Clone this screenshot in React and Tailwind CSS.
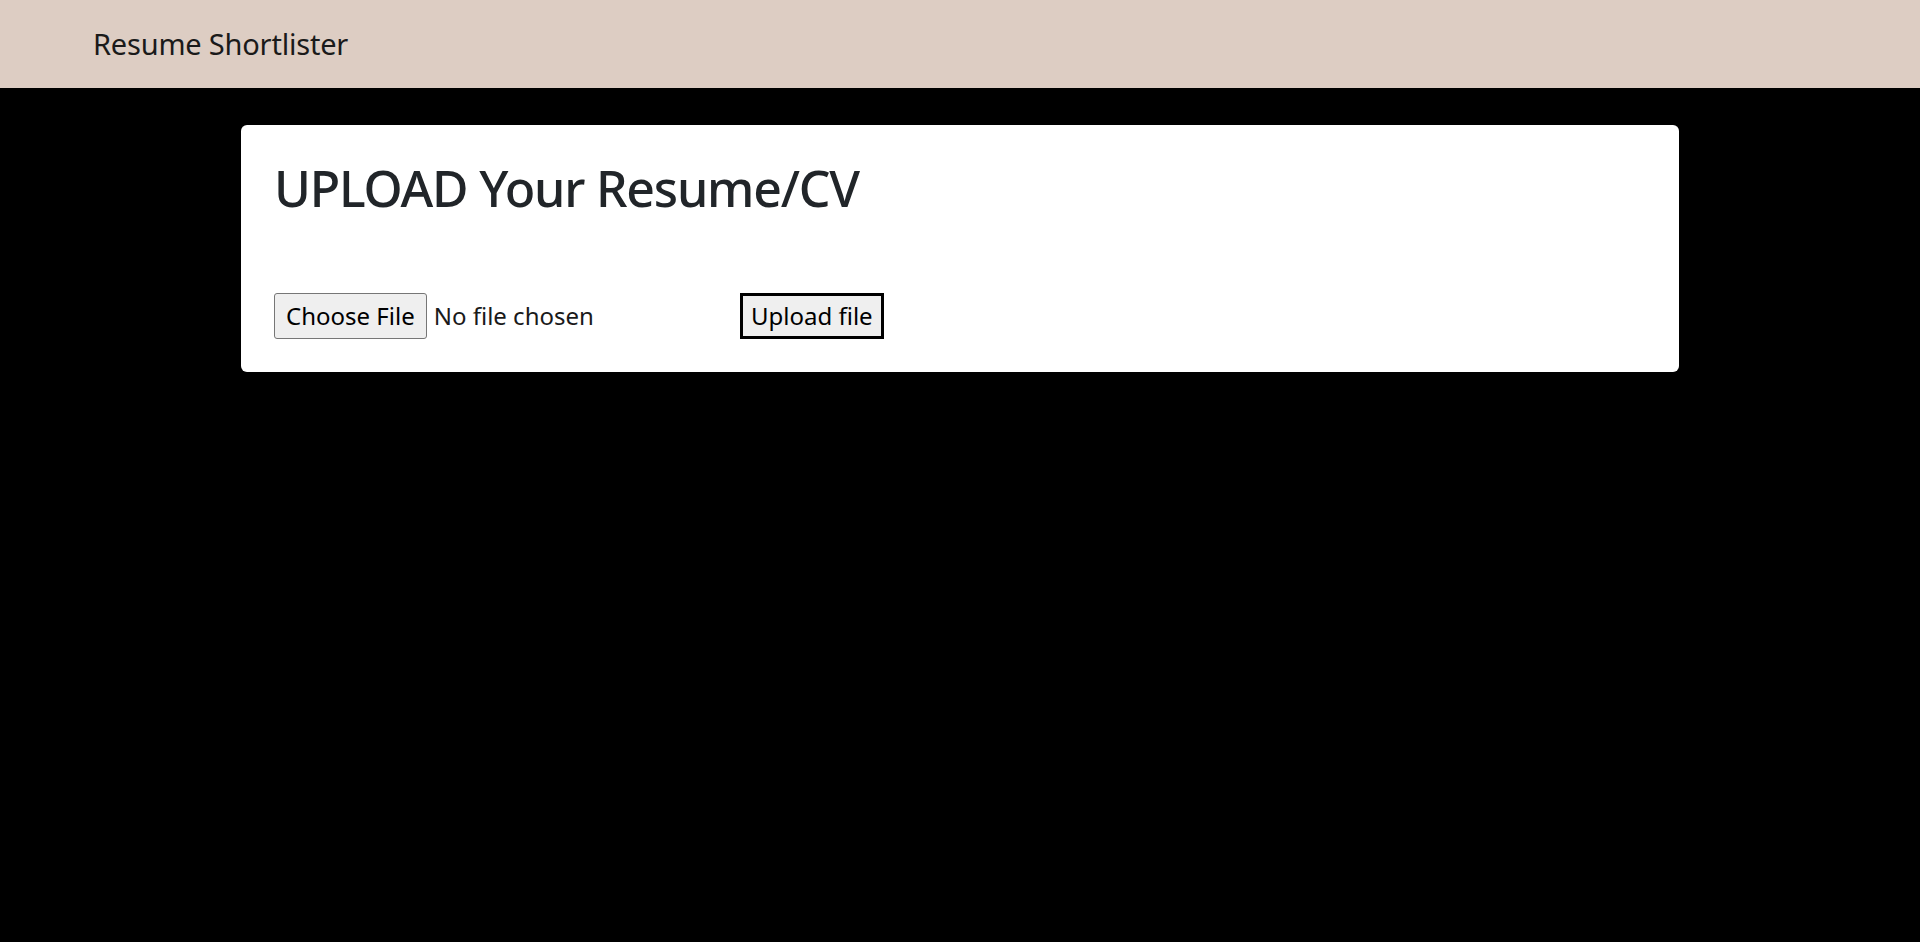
import React from 'react';

const font = { fontFamily: '"Noto Sans", "Open Sans", sans-serif' };

const App = () => {
    return (
        <div className="min-h-screen bg-black" style={font}>
            {/* Navbar */}
            <nav className="h-[88px] bg-[#ddcdc3] flex items-center pl-[93px]">
                <span className="text-[29px] text-[#1a1a1a] tracking-[-0.2px]">Resume Shortlister</span>
            </nav>

            {/* Upload card */}
            <div className="pt-[37px] flex justify-center">
                <div className="w-[1438px] bg-white rounded-[6px] px-[33px] pt-[33px] pb-[33px]">
                    <h1 className="text-[50px] leading-[60px] font-medium text-[#212529] tracking-[-1.2px]">UPLOAD Your Resume/CV</h1>
                    <div className="mt-[75px] flex items-center">
                        <div className="w-[466px] flex items-center">
                            <button className="h-[46px] px-[11px] bg-[#efefef] border border-[#767676] rounded-[3px] text-[24px] leading-none text-black">
                                Choose File
                            </button>
                            <span className="ml-[7px] text-[24px] text-[#1a1a1a]">No file chosen</span>
                        </div>
                        <button className="h-[46px] px-[8px] bg-[#efefef] border-[3px] border-black text-[24px] leading-none text-black">
                            Upload file
                        </button>
                    </div>
                </div>
            </div>
        </div>
    );
};

export default App;
